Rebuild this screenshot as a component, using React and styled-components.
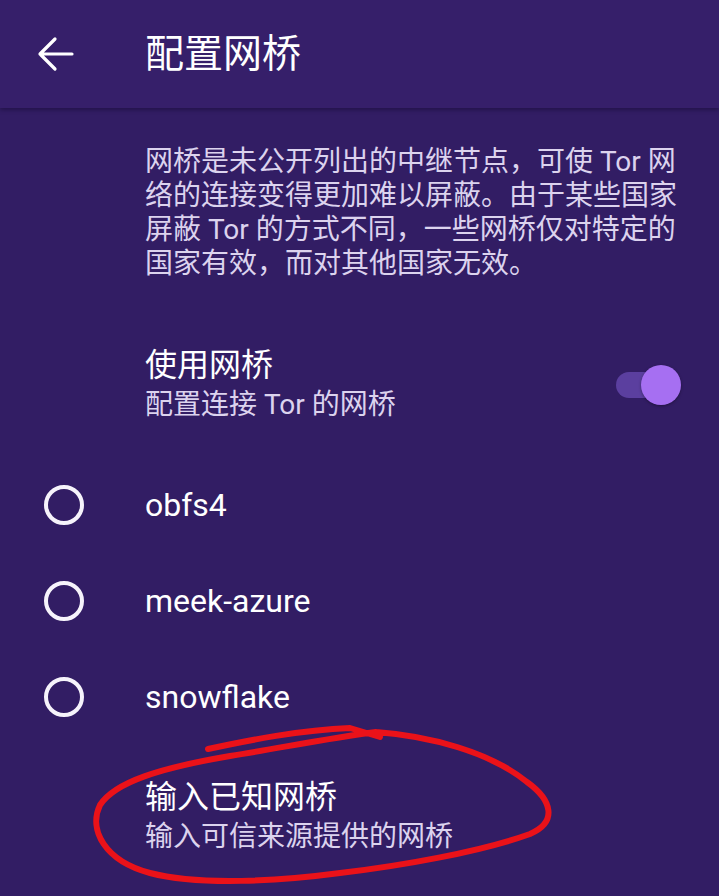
import React from 'react';
import styled, { createGlobalStyle } from 'styled-components';

const GlobalStyle = createGlobalStyle`
  html, body {
    margin: 0;
    padding: 0;
    background: #321d64;
  }
  body {
    font-family: Roboto, "Noto Sans CJK SC", sans-serif;
    -webkit-font-smoothing: antialiased;
  }
`;

const Screen = styled.div`
  position: relative;
  width: 719px;
  height: 896px;
  overflow: hidden;
  background: #321d64;
  display: flex;
  flex-direction: column;
`;

const Toolbar = styled.header`
  height: 108px;
  flex-shrink: 0;
  display: flex;
  align-items: center;
  background: #361f6a;
  box-shadow: 0 2px 4px rgba(10, 0, 30, 0.35);
  position: relative;
  z-index: 1;
`;

const BackButton = styled.button`
  width: 145px;
  height: 108px;
  padding: 0 0 0 32px;
  border: none;
  background: none;
  display: flex;
  align-items: center;
  color: #ffffff;
  cursor: pointer;
`;

const Title = styled.h1`
  margin: 0;
  font-size: 39px;
  font-weight: 400;
  color: #ffffff;
  line-height: 48px;
`;

const Description = styled.p`
  margin: 0;
  padding: 37px 0 32px 145px;
  width: 545px;
  font-size: 28px;
  line-height: 34px;
  color: #dcd3ee;
`;

const TwoLineItem = styled.div`
  height: 144px;
  display: flex;
  align-items: center;
  padding: 0 38px 0 145px;
`;

const ItemText = styled.div`
  flex: 1;
  display: flex;
  flex-direction: column;
`;

const ItemTitle = styled.div`
  font-size: 32px;
  line-height: 40px;
  color: #ffffff;
`;

const ItemSub = styled.div`
  font-size: 28px;
  line-height: 40px;
  color: #dcd3ee;
`;

const Switch = styled.div`
  position: relative;
  width: 65px;
  height: 40px;
  display: flex;
  align-items: center;
`;

const Track = styled.div`
  width: 58px;
  height: 26px;
  border-radius: 13px;
  background: ${p => (p.on ? '#5b3f9f' : '#6b6480')};
`;

const Thumb = styled.div`
  position: absolute;
  top: 0;
  ${p => (p.on ? 'right: 0;' : 'left: 0;')}
  width: 40px;
  height: 40px;
  border-radius: 50%;
  background: ${p => (p.on ? '#a66ff2' : '#ece8f4')};
  box-shadow: 0 1px 3px rgba(0, 0, 0, 0.35);
`;

const RadioRow = styled.label`
  height: 96px;
  display: flex;
  align-items: center;
  cursor: pointer;
`;

const RadioSlot = styled.div`
  width: 145px;
  display: flex;
  align-items: center;
  padding-left: 44px;
  box-sizing: border-box;
`;

const RadioCircle = styled.span`
  width: 40px;
  height: 40px;
  box-sizing: border-box;
  border-radius: 50%;
  border: 4px solid #f6f3fb;
`;

const RadioLabel = styled.span`
  font-size: 32px;
  color: #ffffff;
`;

const Annotation = styled.svg`
  position: absolute;
  left: 0;
  top: 0;
  pointer-events: none;
`;

const BackArrow = () => (
  <svg width="48" height="48" viewBox="0 0 48 48" fill="none" stroke="currentColor"
    strokeWidth="3.2" strokeLinecap="round" strokeLinejoin="round">
    <path d="M40 24 H8 M23 9 L8 24 L23 39" />
  </svg>
);

const bridges = ['obfs4', 'meek-azure', 'snowflake'];

const App = () => {
  return (
    <Screen>
      <GlobalStyle />
      <Toolbar>
        <BackButton aria-label="返回">
          <BackArrow />
        </BackButton>
        <Title>配置网桥</Title>
      </Toolbar>

      <Description>
        网桥是未公开列出的中继节点，可使 Tor 网络的连接变得更加难以屏蔽。由于某些国家屏蔽 Tor 的方式不同，一些网桥仅对特定的国家有效，而对其他国家无效。
      </Description>

      <TwoLineItem>
        <ItemText>
          <ItemTitle>使用网桥</ItemTitle>
          <ItemSub>配置连接 Tor 的网桥</ItemSub>
        </ItemText>
        <Switch>
          <Track on />
          <Thumb on />
        </Switch>
      </TwoLineItem>

      {bridges.map(name => (
        <RadioRow key={name}>
          <RadioSlot>
            <RadioCircle />
          </RadioSlot>
          <RadioLabel>{name}</RadioLabel>
        </RadioRow>
      ))}

      <TwoLineItem>
        <ItemText>
          <ItemTitle>输入已知网桥</ItemTitle>
          <ItemSub>输入可信来源提供的网桥</ItemSub>
        </ItemText>
      </TwoLineItem>

      {/* hand-drawn red circle around the last item */}
      <Annotation width="719" height="896" viewBox="0 0 719 896">
        <path
          d="M208 749 C 250 740, 300 730, 350 728 L 380 737
             M376 732 C 430 736, 490 752, 527 782 C 552 800, 558 822, 530 834
             C 480 852, 400 866, 340 873 C 280 881, 200 886, 150 873
             C 105 861, 88 830, 100 805 C 115 782, 160 768, 230 756
             C 280 748, 330 738, 376 732"
          fill="none"
          stroke="#ea1219"
          strokeWidth="6"
          strokeLinecap="round"
          strokeLinejoin="round"
        />
      </Annotation>
    </Screen>
  );
};

export default App;
